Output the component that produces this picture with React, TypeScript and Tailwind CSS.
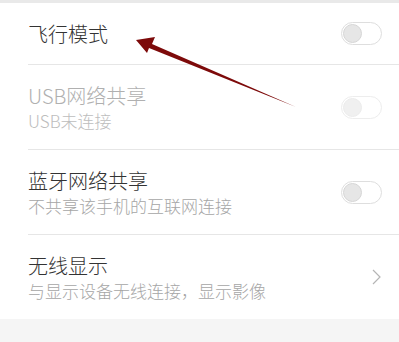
import React from "react";

type Row = {
  title: string;
  subtitle?: string;
  disabled?: boolean;
  control: "toggle" | "chevron";
  height: string;
};

const rows: Row[] = [
  { title: "飞行模式", control: "toggle", height: "h-[62px]" },
  { title: "USB网络共享", subtitle: "USB未连接", disabled: true, control: "toggle", height: "h-[85px]" },
  { title: "蓝牙网络共享", subtitle: "不共享该手机的互联网连接", control: "toggle", height: "h-[85px]" },
  { title: "无线显示", subtitle: "与显示设备无线连接，显示影像", control: "chevron", height: "h-[84px]" },
];

function Toggle({ disabled }: { disabled?: boolean }) {
  return (
    <div
      className={`flex h-[23px] w-[41px] items-center rounded-full border px-[1px] ${
        disabled ? "border-[#ededed]" : "border-[#dedede]"
      }`}
    >
      <span
        className={`h-[19px] w-[19px] rounded-full border ${
          disabled ? "border-[#ececec] bg-[#f0f0f0]" : "border-[#d6d6d6] bg-[#e6e6e6]"
        }`}
      />
    </div>
  );
}

function Chevron() {
  return (
    <svg width="9" height="16" viewBox="0 0 9 16" className="mr-[1px]">
      <path d="M1 1 L8 8 L1 15" fill="none" stroke="#b5b5b5" strokeWidth="1.2" />
    </svg>
  );
}

function SettingRow({ row, last }: { row: Row; last: boolean }) {
  return (
    <div className="pl-[28px]">
      <div
        className={`flex items-center pr-[17px] ${row.height} ${last ? "" : "border-b border-[#e6e6e6]"}`}
      >
        <div className="flex flex-1 flex-col justify-center font-light">
          <span
            className={`text-[20px] leading-[27px] ${row.disabled ? "text-[#b0b0b0]" : "text-[#333333]"}`}
          >
            {row.title}
          </span>
          {row.subtitle && (
            <span
              className={`text-[17px] leading-[23px] ${row.disabled ? "text-[#bdbdbd]" : "text-[#a6a6a6]"}`}
            >
              {row.subtitle}
            </span>
          )}
        </div>
        {row.control === "toggle" ? <Toggle disabled={row.disabled} /> : <Chevron />}
      </div>
    </div>
  );
}

export default function App() {
  return (
    <div
      className="relative h-[342px] w-[399px] overflow-hidden bg-[#f5f5f5]"
      style={{ fontFamily: '"Noto Sans CJK SC", "Noto Sans", sans-serif' }}
    >
      <div className="h-[3px] bg-[#e9e9e9]" />
      <div className="bg-white">
        {rows.map((row, i) => (
          <SettingRow key={row.title} row={row} last={i === rows.length - 1} />
        ))}
      </div>

      {/* annotation arrow */}
      <svg className="pointer-events-none absolute left-0 top-0" width="399" height="342">
        <polygon points="136,40 155,37 152,44 296,107 149,48 147,53" fill="#7d0a0a" />
      </svg>
    </div>
  );
}
